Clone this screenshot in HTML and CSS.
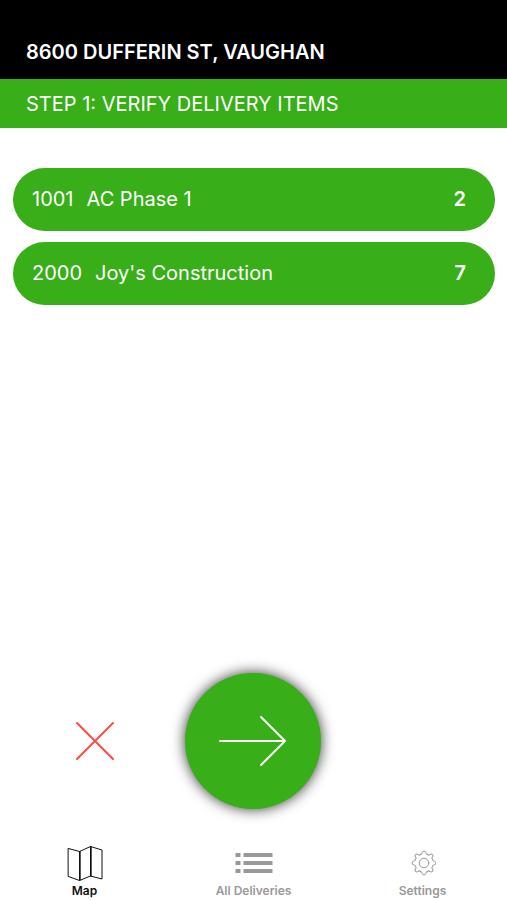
FILE: index.html
```html
<!DOCTYPE html>
<html lang="en">
<head>
<meta charset="utf-8">
<meta name="viewport" content="width=device-width, initial-scale=1">
<title>Verify delivery items</title>
<link rel="stylesheet" href="styles.css">
</head>
<body>
<header>
  <h1 class="address">8600 DUFFERIN ST, VAUGHAN</h1>
  <h2 class="step">STEP 1: VERIFY DELIVERY ITEMS</h2>
</header>
<main class="content">
  <ul class="items">
    <li><button class="item" type="button"><span>1001</span><span class="name">AC Phase 1</span><span class="count">2</span></button></li>
    <li><button class="item" type="button"><span>2000</span><span class="name">Joy's Construction</span><span class="count">7</span></button></li>
  </ul>
  <div class="actions">
    <button class="cancel" type="button" aria-label="Cancel">
      <svg width="40" height="40" viewBox="0 0 40 40" aria-hidden="true"><path d="M2 2L38 38M38 2L2 38"/></svg>
    </button>
    <button class="next" type="button" aria-label="Next">
      <svg width="68" height="52" viewBox="0 0 68 52" aria-hidden="true"><path d="M1 26H66M42 2L66 26L42 50"/></svg>
    </button>
  </div>
</main>
<nav class="tabs">
  <a class="tab active" href="#map" aria-current="page">
    <svg width="36" height="36" viewBox="0 0 36 36" aria-hidden="true"><path d="M1.500 3.500L12.500 6.500L23.500 1.500L35 5V34L23.500 31L12.500 35.500L1.500 31.500ZM12.500 6.500V35.500M13.200 6.500V35M23.500 1.500V31M24.200 2V31"/></svg>
    <span>Map</span>
  </a>
  <a class="tab" href="#deliveries">
    <svg class="list" width="38" height="36" viewBox="0 0 38 36" aria-hidden="true"><path d="M0.500 8h5v4h-5zM8.500 8h29v4h-29zM0.500 16h5v4h-5zM8.500 16h29v4h-29zM0.500 24h5v4h-5zM8.500 24h29v4h-29z"/></svg>
    <span>All Deliveries</span>
  </a>
  <a class="tab" href="#settings">
    <svg width="26" height="36" viewBox="-14 -18 26 36" aria-hidden="true">
      <defs><path id="tooth" d="M-3.600 -8.700C-2.200 -8 -1.900 -9.500 -1.800 -10.500Q-1.600 -11.900 0 -11.900Q1.600 -11.900 1.800 -10.500C1.900 -9.500 2.200 -8 3.600 -8.700"/></defs>
      <use href="#tooth"/><use href="#tooth" transform="rotate(45)"/><use href="#tooth" transform="rotate(90)"/><use href="#tooth" transform="rotate(135)"/><use href="#tooth" transform="rotate(180)"/><use href="#tooth" transform="rotate(225)"/><use href="#tooth" transform="rotate(270)"/><use href="#tooth" transform="rotate(315)"/>
      <circle r="4.800"/>
    </svg>
    <span>Settings</span>
  </a>
</nav>
</body>
</html>
```
FILE: styles.css
```css
* {
  box-sizing: border-box;
}

body {
  margin: 0;
  min-height: 100vh;
  display: flex;
  flex-direction: column;
  background: #fff;
  font-family: Inter, "Liberation Sans", sans-serif;
  font-size: 20px;
  line-height: 24px;
}

h1,
h2 {
  margin: 0;
  font-size: 20px;
  color: #fff;
}

.address {
  padding: 40px 26px 15px;
  background: #000;
  font-weight: 600;
}

.step {
  padding: 13px 26px 12px;
  background: #38ae18;
  font-weight: 400;
}

button {
  border: 0;
  padding: 0;
  background: none;
  font: inherit;
  cursor: pointer;
}

.content {
  flex: 1;
  display: flex;
  flex-direction: column;
  justify-content: space-between;
  padding: 40px 12px 0 13px;
}

.items {
  margin: 0;
  padding: 0;
  list-style: none;
  display: grid;
  gap: 11px;
}

.item {
  width: 100%;
  height: 63px;
  padding: 0 29px 1px 19px;
  display: flex;
  align-items: center;
  gap: 13px;
  border-radius: 32px;
  background: #38ae18;
  color: #fff;
}

.count {
  margin-left: auto;
  font-weight: 600;
}

.actions {
  display: grid;
  grid-template-columns: 1fr 136px 1fr;
  align-items: center;
  padding-bottom: 31px;
}

.cancel {
  justify-self: center;
  display: flex;
}

.cancel svg {
  margin-right: 10px;
}

.next {
  height: 136px;
  margin: 0 1px 0 -1px;
  display: flex;
  align-items: center;
  justify-content: center;
  border-radius: 50%;
  background: #38ae18;
  box-shadow: 0 0 14px rgba(0, 0, 0, 0.8);
}

svg {
  display: block;
  fill: none;
  stroke-linecap: round;
  stroke-linejoin: round;
}

.cancel svg {
  stroke: #ff4a45;
  stroke-width: 2;
}

.next svg {
  stroke: #fff;
  stroke-width: 2;
}

.tabs {
  display: grid;
  grid-template-columns: repeat(3, 1fr);
  padding: 5px 0 1px;
}

.tab {
  display: flex;
  flex-direction: column;
  align-items: center;
  gap: 2px;
  color: #999;
  font-size: 12px;
  font-weight: 600;
  line-height: 16px;
  text-decoration: none;
}

.tab svg {
  stroke: currentColor;
}

.tab .list {
  fill: currentColor;
  stroke: none;
}

.active {
  color: #111;
}
```
